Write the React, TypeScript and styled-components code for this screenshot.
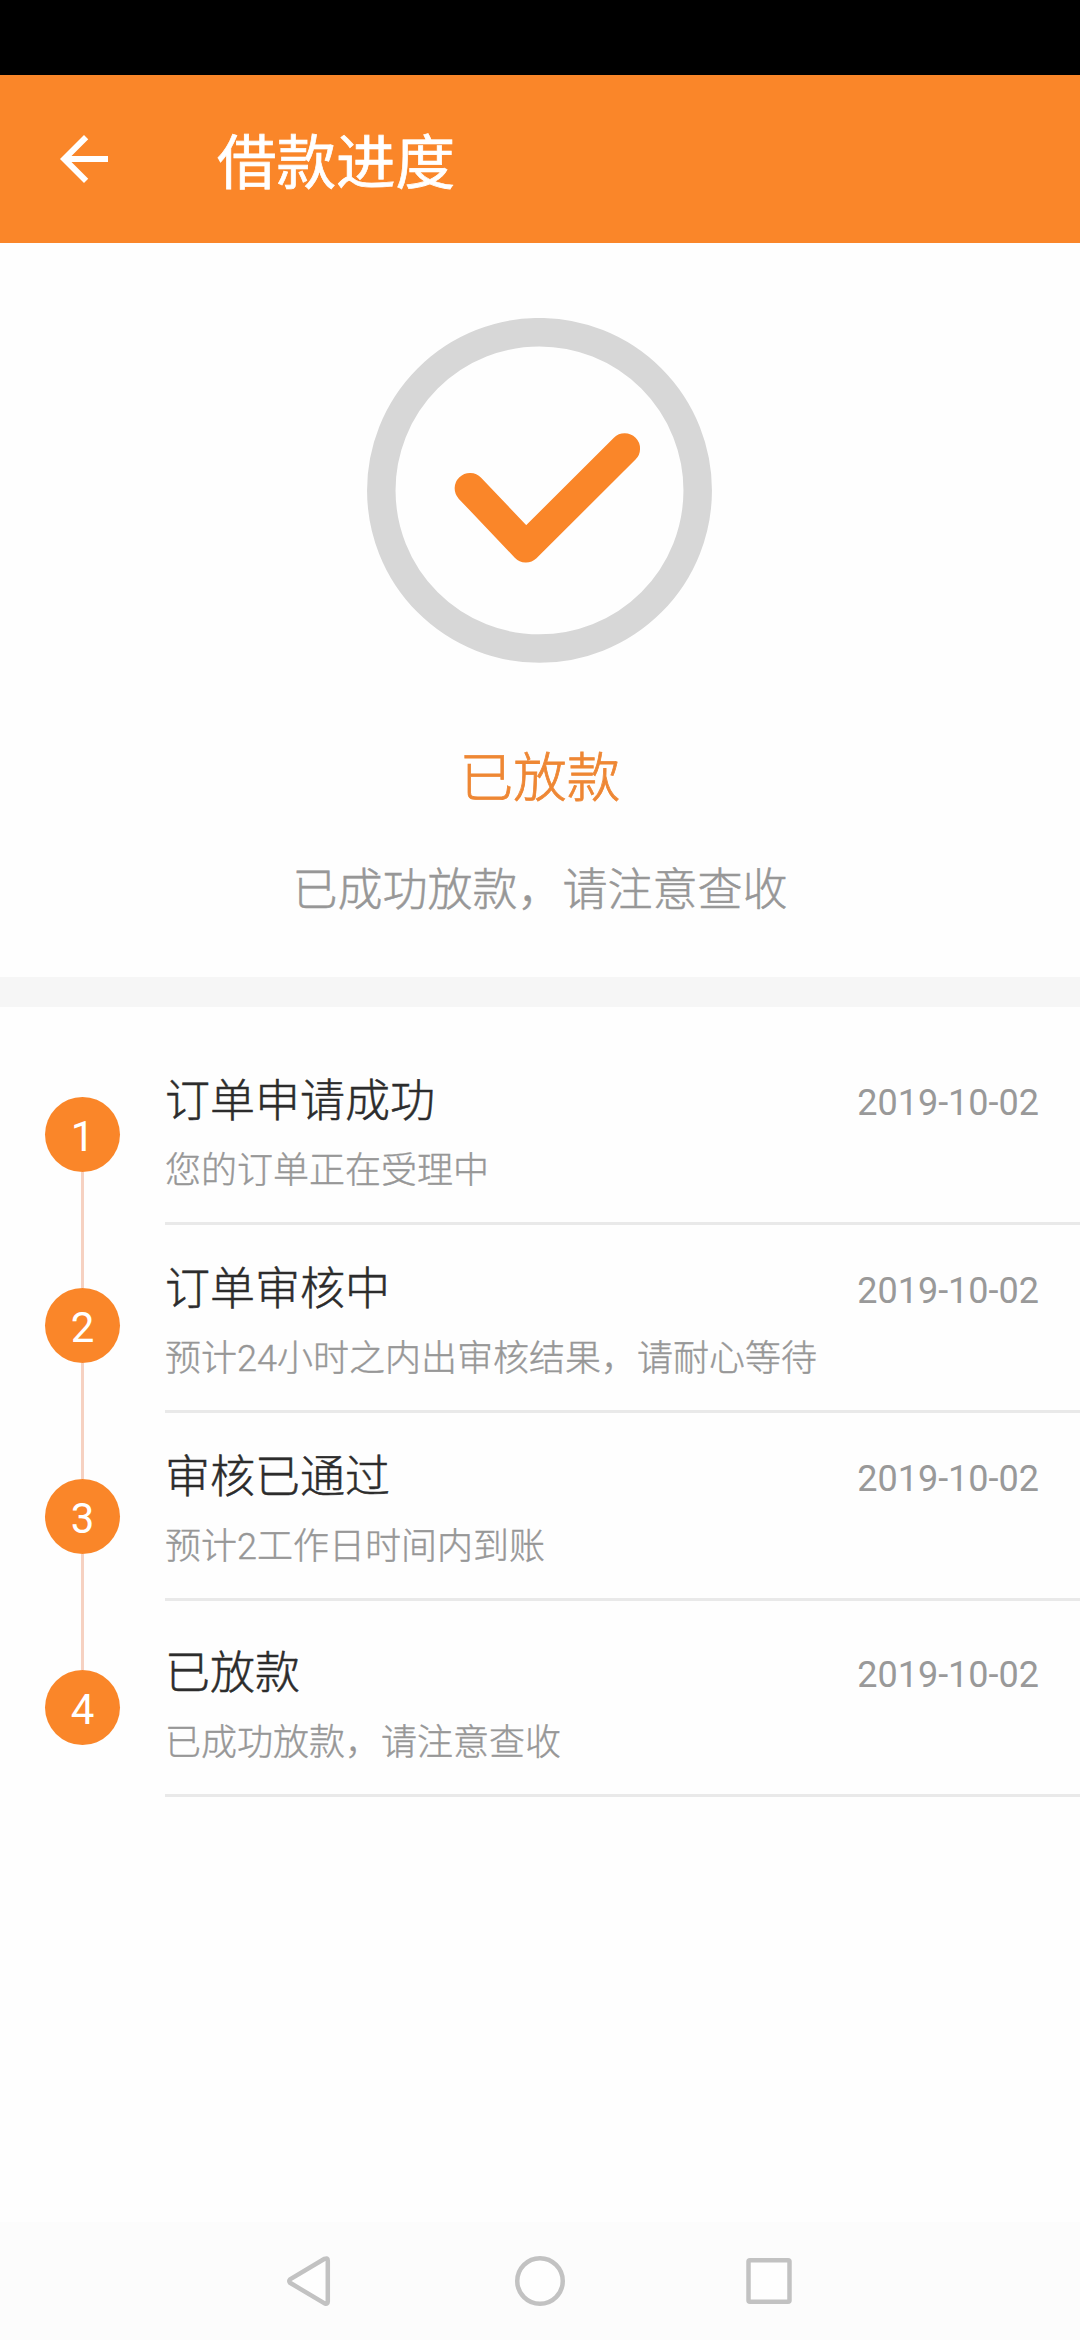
import React from "react";
import styled, { createGlobalStyle } from "styled-components";

const ORANGE = "#fa8629";
const SANS = `Roboto, "Noto Sans CJK SC", sans-serif`;

const GlobalStyle = createGlobalStyle`
  body {
    margin: 0;
    background: #fefefe;
    font-family: ${SANS};
  }
`;

const Screen = styled.div`
  display: flex;
  flex-direction: column;
  width: 1080px;
  height: 2340px;
  overflow: hidden;
  background: #fefefe;
`;

const StatusBar = styled.div`
  flex: none;
  height: 75px;
  background: #000;
`;

const Header = styled.header`
  flex: none;
  display: flex;
  align-items: center;
  gap: 97px;
  height: 168px;
  padding-left: 48px;
  background: ${ORANGE};
`;

const BackIcon = styled.svg`
  flex: none;
  width: 72px;
  height: 72px;
  fill: #fff;
`;

const HeaderTitle = styled.h1`
  margin: 0;
  padding-bottom: 2px;
  font-family: "Noto Sans CJK SC", sans-serif;
  font-size: 59.5px;
  font-weight: 400;
  line-height: 80px;
  color: #fff;
  -webkit-text-stroke: 0.7px #fff;
`;

const Result = styled.section`
  flex: none;
  display: flex;
  flex-direction: column;
  align-items: center;
  box-sizing: border-box;
  height: 764px;
  padding-top: 75px;
  border-bottom: 30px solid #f6f6f6;
`;

const ResultIcon = styled.svg`
  flex: none;
  width: 346px;
  height: 346px;
`;

const ResultTitle = styled.h2`
  margin: 75px 0 0;
  font-size: 53.5px;
  font-weight: 300;
  line-height: 80px;
  color: #ee8734;
  -webkit-text-stroke: 0.8px #ee8734;
`;

const ResultText = styled.p`
  margin: 37px 0 0;
  font-size: 45px;
  font-weight: 300;
  line-height: 70px;
  color: #979797;
  -webkit-text-stroke: 0.5px #979797;
`;

const Progress = styled.section`
  flex: 1;
  display: flex;
`;

const Rail = styled.div`
  flex: none;
  display: flex;
  flex-direction: column;
  align-items: center;
  width: 165px;
  padding-top: 90px;
`;

const Badge = styled.div`
  display: flex;
  align-items: center;
  justify-content: center;
  box-sizing: border-box;
  width: 75px;
  height: 75px;
  padding-top: 3px;
  border-radius: 50%;
  background: ${ORANGE};
  font-size: 42px;
  color: #fff;
`;

const Connector = styled.div`
  width: 3px;
  height: 116px;
  background: #f6d1c1;
`;

const Steps = styled.div`
  flex: 1;
  padding-top: 30px;
`;

const Step = styled.article<{ $tall?: boolean }>`
  box-sizing: border-box;
  height: ${(p) => (p.$tall ? 196 : 188)}px;
  padding: ${(p) => (p.$tall ? 41 : 33)}px 41px 0 0;
  border-bottom: 3px solid #e9e9e9;
`;

const StepHead = styled.div`
  display: flex;
  align-items: center;
  justify-content: space-between;
  height: 64px;
`;

const StepTitle = styled.h3`
  margin: 0;
  font-size: 45px;
  font-weight: 300;
  line-height: 64px;
  color: #2c2c2c;
  -webkit-text-stroke: 0.5px #2c2c2c;
`;

const StepDate = styled.time`
  padding-top: 1px;
  font-size: 36px;
  line-height: 42px;
  color: #999;
`;

const StepText = styled.p`
  margin: 11px 0 0;
  font-size: 36px;
  font-weight: 300;
  line-height: 52px;
  color: #979797;
  -webkit-text-stroke: 0.4px #979797;
`;

const NavBar = styled.nav`
  flex: none;
  display: flex;
  justify-content: center;
  align-items: center;
  gap: 170px;
  height: 118px;
  background: #fcfcfc;
`;

const NavIcon = styled.svg`
  width: 60px;
  height: 60px;
  fill: #fefefe;
  stroke: #c2c2c2;
  stroke-width: 4.5;
  stroke-linejoin: round;
`;

const steps = [
  { title: "订单申请成功", text: "您的订单正在受理中", date: "2019-10-02" },
  { title: "订单审核中", text: "预计24小时之内出审核结果，请耐心等待", date: "2019-10-02" },
  { title: "审核已通过", text: "预计2工作日时间内到账", date: "2019-10-02" },
  { title: "已放款", text: "已成功放款，请注意查收", date: "2019-10-02" },
];

export default function App() {
  return (
    <Screen lang="zh-CN">
      <GlobalStyle />
      <StatusBar />
      <Header>
        <BackIcon viewBox="0 0 24 24">
          <path d="M20 11H7.83l5.59-5.59L12 4l-8 8 8 8 1.41-1.41L7.83 13H20v-2z" />
        </BackIcon>
        <HeaderTitle>借款进度</HeaderTitle>
      </Header>

      <Result>
        <ResultIcon viewBox="0 0 346 346" fill="none">
          <circle cx="172.5" cy="172.4" r="158.2" stroke="#d7d7d7" strokeWidth="28.5" />
          <path
            d="M103 170.3L158.9 229.1L257.7 130.7"
            stroke={ORANGE}
            strokeWidth="30.7"
            strokeLinecap="round"
            strokeLinejoin="round"
          />
        </ResultIcon>
        <ResultTitle>已放款</ResultTitle>
        <ResultText>已成功放款，请注意查收</ResultText>
      </Result>

      <Progress>
        <Rail>
          {steps.map((step, i) => (
            <React.Fragment key={step.title}>
              {i > 0 && <Connector />}
              <Badge>{i + 1}</Badge>
            </React.Fragment>
          ))}
        </Rail>
        <Steps>
          {steps.map((step, i) => (
            <Step key={step.title} $tall={i === steps.length - 1}>
              <StepHead>
                <StepTitle>{step.title}</StepTitle>
                <StepDate>{step.date}</StepDate>
              </StepHead>
              <StepText>{step.text}</StepText>
            </Step>
          ))}
        </Steps>
      </Progress>

      <NavBar>
        <NavIcon viewBox="0 0 60 60">
          <path d="M10 28.4L44.6 7.8Q47.8 6.6 47.8 9.4V50.8Q47.8 53.6 44.6 52.4L10 31.8Q8.6 30 10 28.4Z" />
        </NavIcon>
        <NavIcon viewBox="0 0 60 60">
          <circle cx="30" cy="30" r="22.75" />
        </NavIcon>
        <NavIcon viewBox="0 0 60 60">
          <rect x="8.5" y="9.2" width="41" height="41.5" rx="1.5" />
        </NavIcon>
      </NavBar>
    </Screen>
  );
}
